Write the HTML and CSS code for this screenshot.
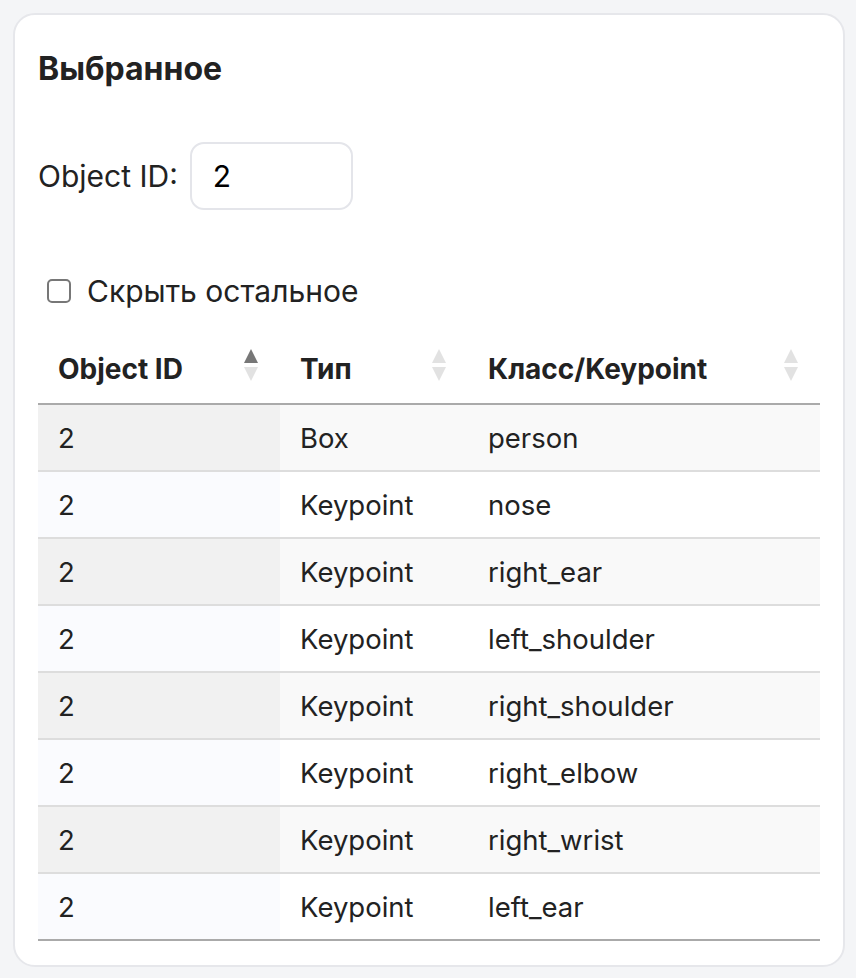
FILE: index.html
```html
<!DOCTYPE html>
<html lang="ru">
<head>
  <meta charset="UTF-8" />
  <meta name="viewport" content="width=device-width, initial-scale=1.0"/>
  <title>Выбранное</title>
  <link rel="stylesheet" href="styles.css">
</head>
<body>
  <div class="card">
    <h2 class="card-title">Выбранное</h2>

    <div class="id-row">
      <label for="obj-id">Object ID:</label>
      <input type="text" id="obj-id" value="2" />
    </div>

    <label class="hide-row">
      <span class="check"></span>
      Скрыть остальное
    </label>

    <table class="data-table">
      <thead>
        <tr>
          <th class="sorted">Object ID<span class="sort"><i class="up"></i><i class="down"></i></span></th>
          <th>Тип<span class="sort"><i class="up"></i><i class="down"></i></span></th>
          <th>Класс/Keypoint<span class="sort"><i class="up"></i><i class="down"></i></span></th>
        </tr>
      </thead>
      <tbody>
        <tr class="odd"><td class="sorting_1">2</td><td>Box</td><td>person</td></tr>
        <tr class="even"><td class="sorting_1">2</td><td>Keypoint</td><td>nose</td></tr>
        <tr class="odd"><td class="sorting_1">2</td><td>Keypoint</td><td>right_ear</td></tr>
        <tr class="even"><td class="sorting_1">2</td><td>Keypoint</td><td>left_shoulder</td></tr>
        <tr class="odd"><td class="sorting_1">2</td><td>Keypoint</td><td>right_shoulder</td></tr>
        <tr class="even"><td class="sorting_1">2</td><td>Keypoint</td><td>right_elbow</td></tr>
        <tr class="odd"><td class="sorting_1">2</td><td>Keypoint</td><td>right_wrist</td></tr>
        <tr class="even"><td class="sorting_1">2</td><td>Keypoint</td><td>left_ear</td></tr>
      </tbody>
    </table>
  </div>
</body>
</html>
```

FILE: styles.css
```css
* { margin: 0; padding: 0; box-sizing: border-box; }

html, body {
  width: 100%;
  height: 100%;
  font-family: Inter, 'Noto Sans', sans-serif;
  background-color: #f4f5f7;
  color: #222;
}

body {
  padding: 13px 11px 12px 13px;
}

.card {
  background: #fff;
  border: 2px solid #e6e7eb;
  border-radius: 22px;
  padding: 36px 23px 24px 23px;
}

.card-title {
  font-size: 32px;
  font-weight: 700;
  line-height: 36px;
  color: #222;
}

.id-row {
  display: flex;
  align-items: center;
  gap: 12px;
  margin-top: 55px;
  font-size: 30px;
}

.id-row label {
  color: #222;
}

.id-row input {
  width: 163px;
  height: 68px;
  border: 2px solid #e4e5ea;
  border-radius: 14px;
  padding: 0 21px;
  font-family: inherit;
  font-size: 30px;
  color: #000;
  outline: none;
}

.hide-row {
  display: flex;
  align-items: center;
  gap: 16px;
  height: 36px;
  margin-top: 63px;
  padding-left: 9px;
  font-size: 30px;
  color: #222;
}

.check {
  width: 24px;
  height: 24px;
  border: 2px solid #777;
  border-radius: 5px;
  background: #fff;
}

.data-table {
  width: 100%;
  margin-top: 26px;
  border-collapse: collapse;
  font-size: 27.5px;
}

.data-table th {
  position: relative;
  text-align: left;
  font-weight: 700;
  font-size: 28px;
  height: 69px;
  padding: 0 20px;
  border-bottom: 2px solid #aaa;
}

.data-table th:nth-child(1) { width: 242px; }
.data-table th:nth-child(2) { width: 188px; }

.sort {
  position: absolute;
  right: 22px;
  top: 14px;
  display: flex;
  flex-direction: column;
  gap: 4px;
}

.sort i {
  width: 0;
  height: 0;
  border-left: 7px solid transparent;
  border-right: 7px solid transparent;
}

.sort .up { border-bottom: 14px solid #e2e2e2; }
.sort .down { border-top: 14px solid #e2e2e2; }

.sorted .sort .up { border-bottom-color: #777; }

.data-table td {
  height: 67px;
  padding: 0 20px;
  border-bottom: 2px solid #ddd;
}

.data-table tbody tr:last-child td {
  border-bottom-color: #aaa;
}

.data-table tr.odd td { background: #f9f9f9; }
.data-table tr.odd td.sorting_1 { background: #f1f1f1; }
.data-table tr.even td.sorting_1 { background: #fafbfe; }
```
